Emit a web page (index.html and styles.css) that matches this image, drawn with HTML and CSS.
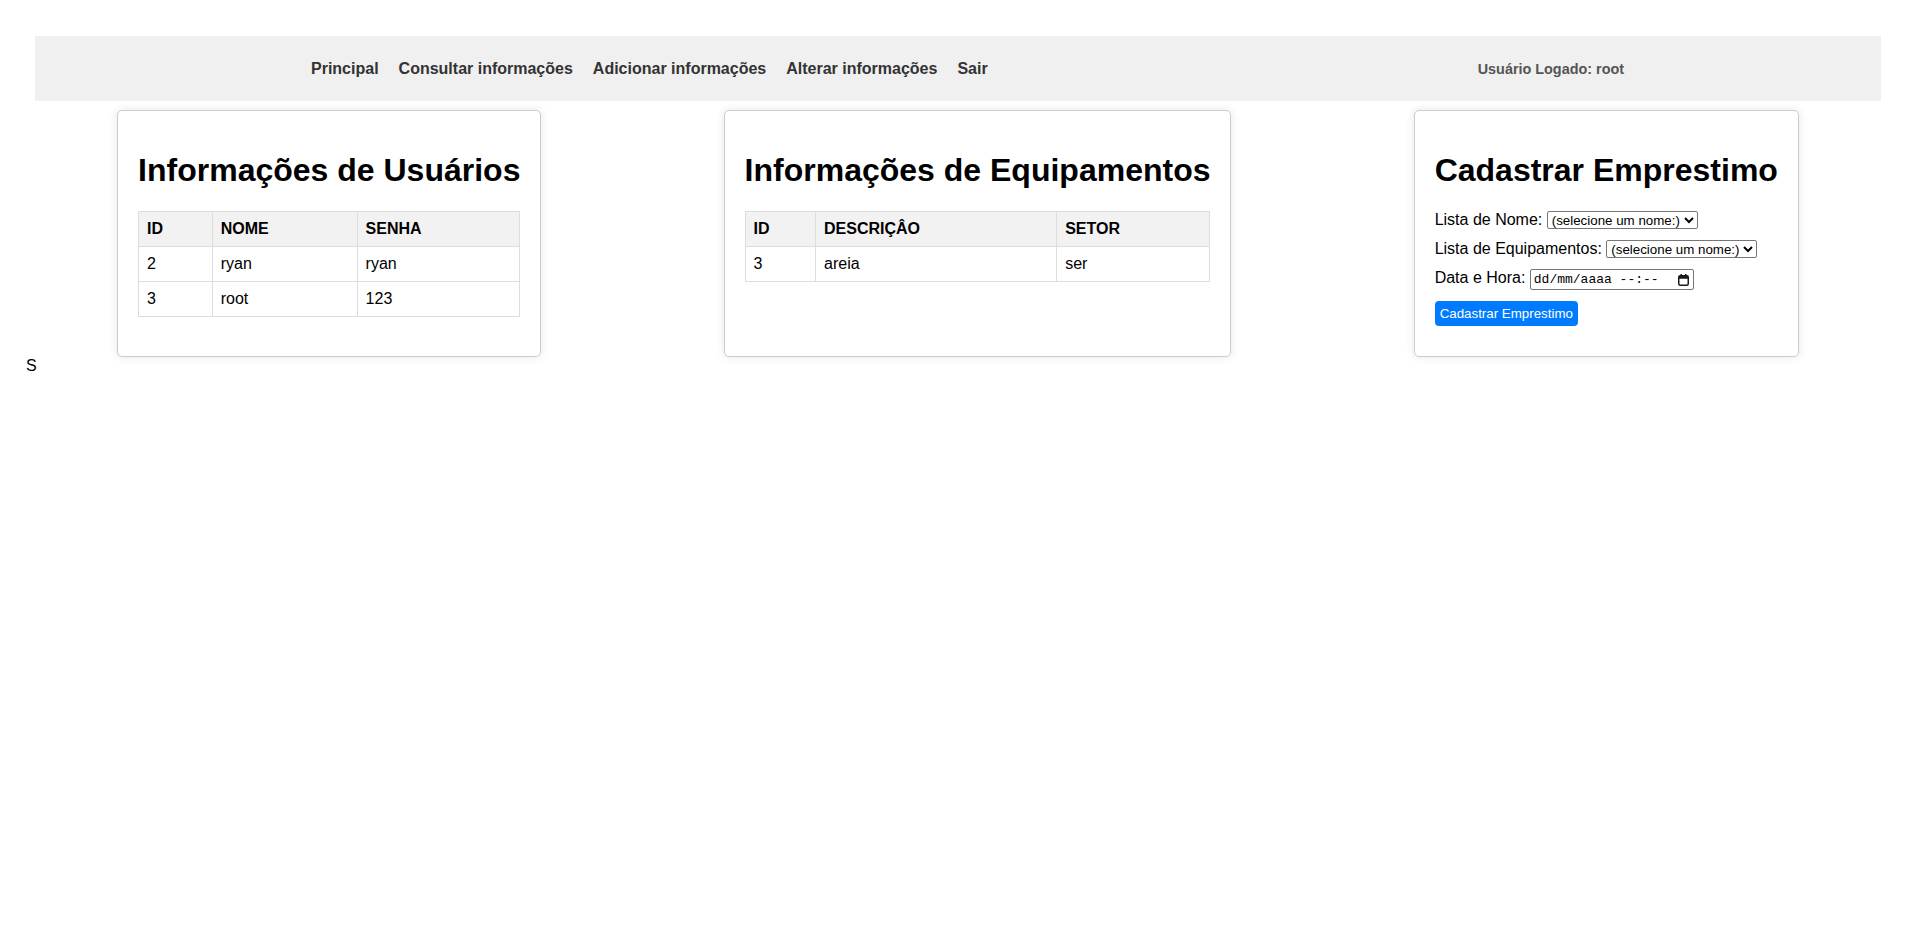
FILE: index.html
```html
<!DOCTYPE html>
<html lang="pt-BR">
<head>
<meta charset="utf-8">
<title>Painel</title>
<link rel="stylesheet" href="styles.css">
</head>
<body>
<nav class="topnav">
  <ul class="menu">
    <li><a href="#">Principal</a></li>
    <li><a href="#">Consultar informações</a></li>
    <li><a href="#">Adicionar informações</a></li>
    <li><a href="#">Alterar informações</a></li>
    <li><a href="#">Sair</a></li>
  </ul>
  <span class="user">Usuário Logado: root</span>
</nav>
<div class="cards">
  <section class="card">
    <h1>Informações de Usuários</h1>
    <table class="grid">
      <thead><tr><th>ID</th><th>NOME</th><th>SENHA</th></tr></thead>
      <tbody>
        <tr><td>2</td><td>ryan</td><td>ryan</td></tr>
        <tr><td>3</td><td>root</td><td>123</td></tr>
      </tbody>
    </table>
  </section>
  <section class="card">
    <h1>Informações de Equipamentos</h1>
    <table class="grid">
      <thead><tr><th>ID</th><th>DESCRIÇÂO</th><th>SETOR</th></tr></thead>
      <tbody>
        <tr><td>3</td><td>areia</td><td>ser</td></tr>
      </tbody>
    </table>
  </section>
  <section class="card">
    <h1>Cadastrar Emprestimo</h1>
    <form class="loan">
      <div class="row row-sel">Lista de Nome: <select class="pick"><option>(selecione um nome:)</option></select></div>
      <div class="row row-sel">Lista de Equipamentos: <select class="pick"><option>(selecione um nome:)</option></select></div>
      <div class="row row-date">Data e Hora: <span class="datebox"><span class="datetext">dd/mm/aaaa --:--</span><svg class="cal" width="11" height="12" viewBox="0 0 11 12"><rect x="0.75" y="1.75" width="9.5" height="9.5" rx="1.5" fill="none" stroke="#1a1a1a" stroke-width="1.5"/><rect x="0.75" y="1.75" width="9.5" height="3" fill="#1a1a1a"/><rect x="2.5" y="0" width="1.5" height="2.5" fill="#1a1a1a"/><rect x="7" y="0" width="1.5" height="2.5" fill="#1a1a1a"/></svg></span></div>
      <div class="row row-btn"><button type="button" class="btn">Cadastrar Emprestimo</button></div>
    </form>
  </section>
</div>
<div class="stray">S</div>
</body>
</html>
```
FILE: styles.css
```css
html, body {
  background: #fff;
}
body {
  margin: 0;
  padding: 0 28px 0 26px;
  font-family: "Liberation Sans", Arial, sans-serif;
  font-size: 16px;
  color: #000;
}
.topnav {
  margin: 36px 9px 9px 9px;
  height: 65px;
  background: #f0f0f0;
  display: flex;
  align-items: center;
  justify-content: space-between;
  padding: 0 257px 0 266px;
}
.menu {
  list-style: none;
  margin: 0;
  padding: 0;
  display: flex;
}
.menu a {
  display: block;
  padding: 0 10px;
  color: #333;
  font-weight: bold;
  text-decoration: none;
  font-size: 16px;
}
.user {
  color: #555;
  font-weight: bold;
  font-size: 14.4px;
  position: relative;
  top: 0.5px;
}
.cards {
  display: flex;
  justify-content: space-around;
}
.card {
  background: #fff;
  border: 1px solid #ccc;
  border-radius: 5px;
  box-shadow: 0 0 10px rgba(0, 0, 0, 0.1);
  padding: 20px;
}
.card h1 {
  font-size: 32px;
  margin: 21.44px 0;
  white-space: nowrap;
}
.grid {
  width: 100%;
  border-collapse: collapse;
}
.grid th, .grid td {
  border: 1px solid #ddd;
  padding: 8px;
  text-align: left;
}
.grid th {
  background: #f2f2f2;
}
.row {
  margin-bottom: 10px;
  white-space: nowrap;
}
.row-sel {
  height: 19px;
}
.row-date {
  height: 22px;
}
.row-btn {
  height: 25px;
}
.pick {
  font-family: "Liberation Sans", Arial, sans-serif;
  font-size: 13.33px;
  height: 18px;
  padding: 0;
  border: 1px solid #767676;
  border-radius: 2px;
  color: #000;
  background: #fff;
}
.datebox {
  display: inline-flex;
  align-items: center;
  box-sizing: border-box;
  width: 164px;
  height: 21.5px;
  border: 1px solid #767676;
  border-radius: 2px;
  padding: 0 4px 0 3px;
}
.datetext {
  font-family: "Liberation Mono", "Courier New", monospace;
  font-size: 13px;
  color: #000;
}
.cal {
  margin-left: auto;
}
.btn {
  display: block;
  height: 25px;
  font-family: "Liberation Sans", Arial, sans-serif;
  font-size: 13.33px;
  line-height: 15px;
  background: #007bff;
  color: #fff;
  border: none;
  border-radius: 4px;
  padding: 5px 5px;
}
.stray {
  line-height: normal;
}
```
